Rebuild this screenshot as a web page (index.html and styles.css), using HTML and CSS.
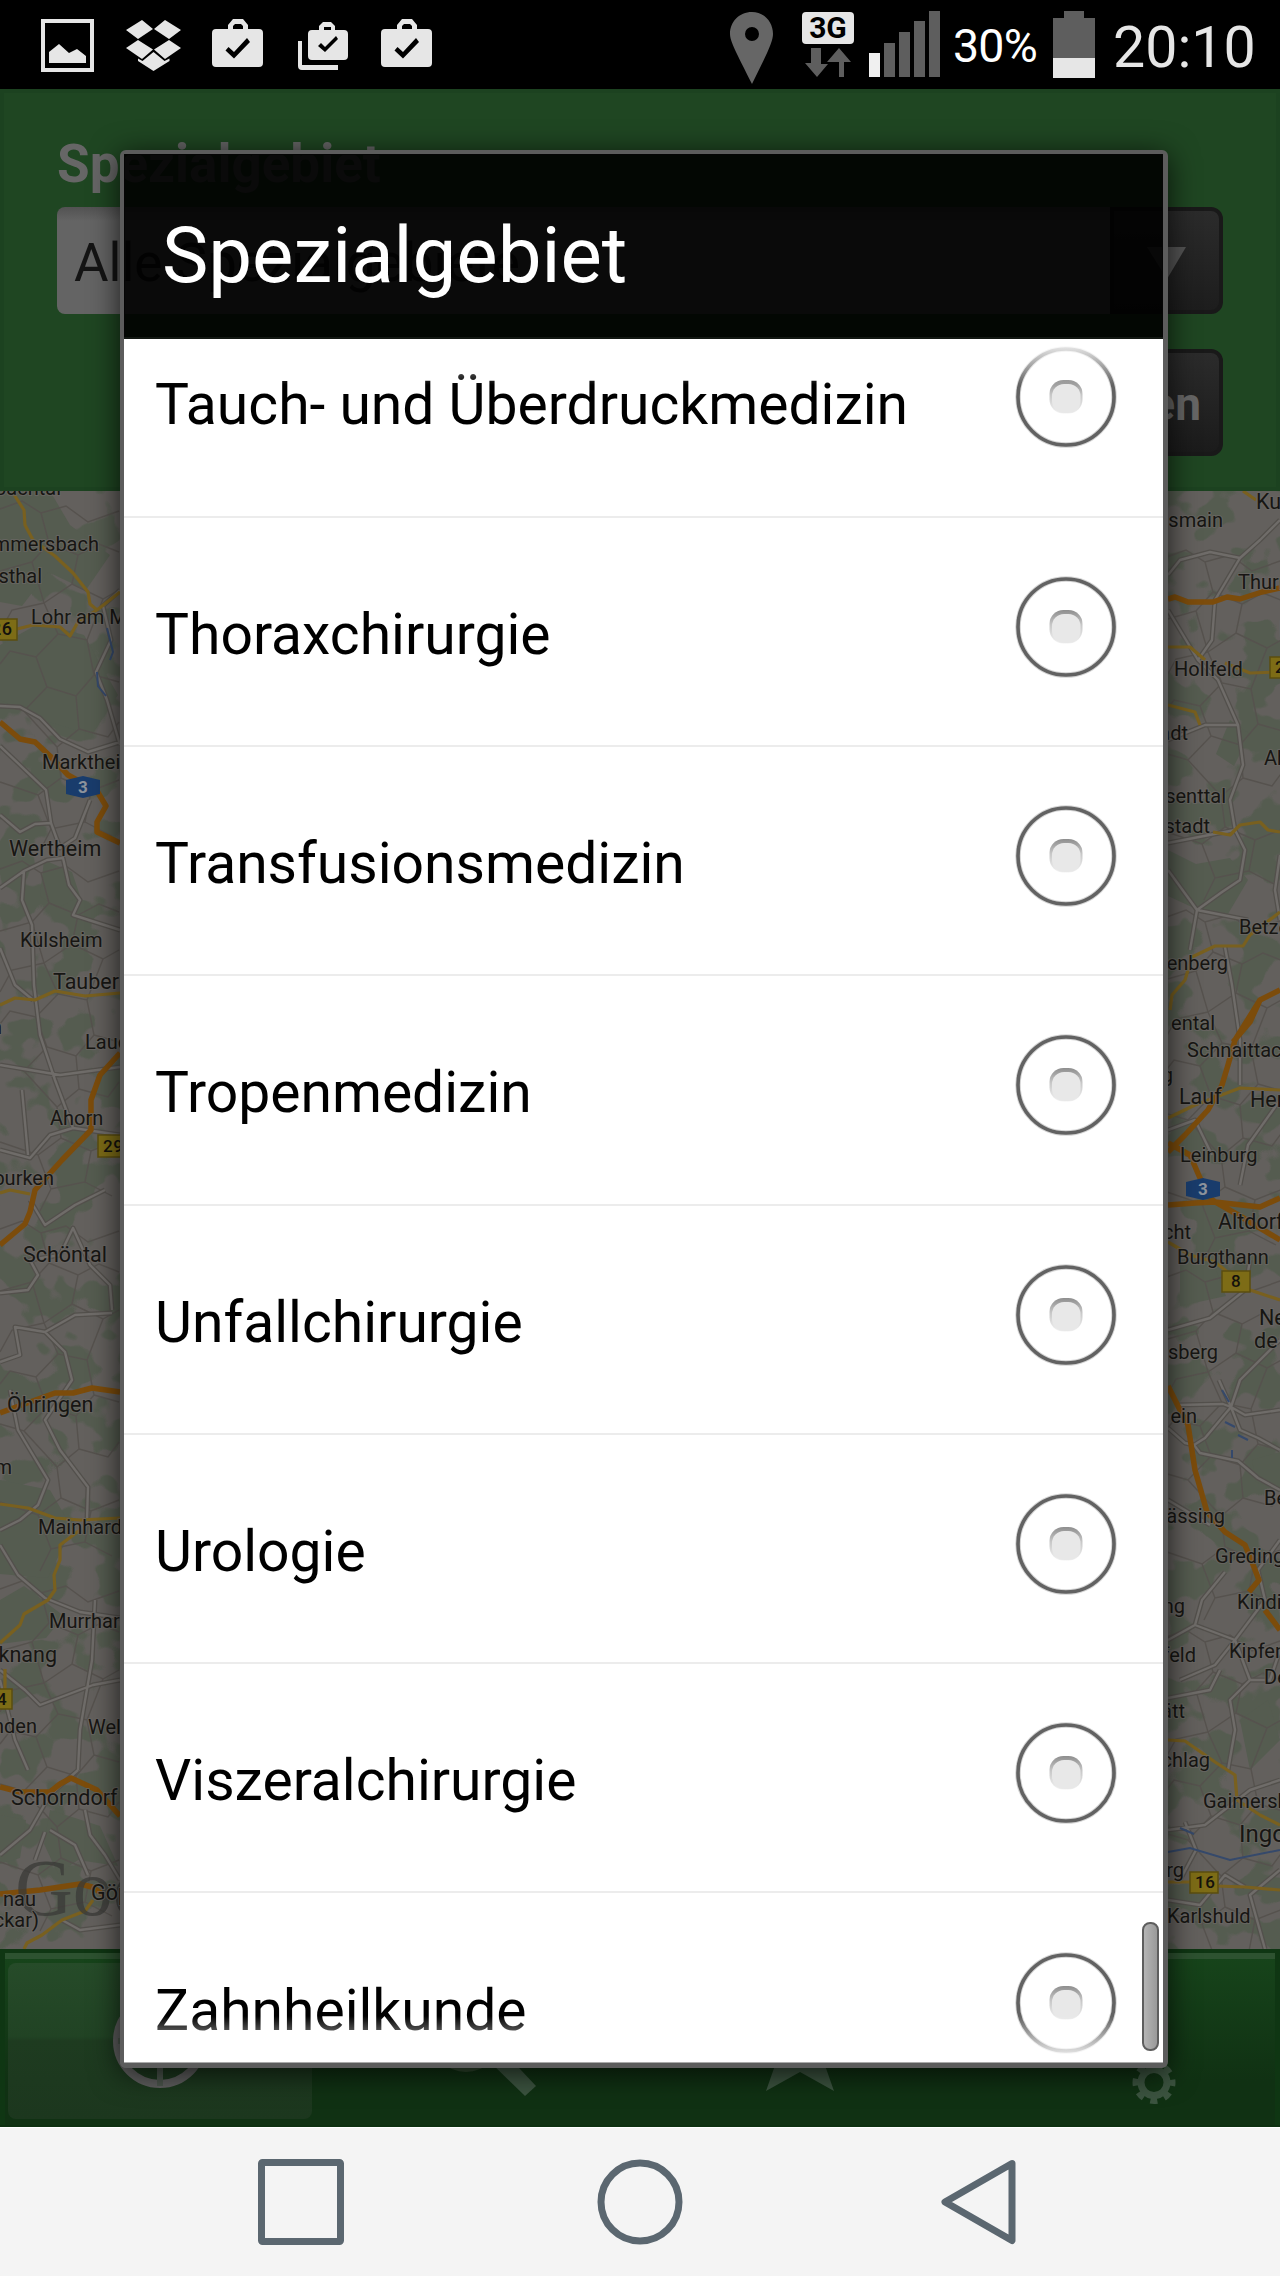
FILE: index.html
```html
<!DOCTYPE html>
<html lang="de">
<head>
<meta charset="utf-8">
<title>Spezialgebiet</title>
<link rel="stylesheet" href="styles.css">
</head>
<body>
<svg class="defs" width="0" height="0" aria-hidden="true">
  <defs>
    <linearGradient id="dot" x1="0" y1="0" x2="0" y2="1">
      <stop offset="0" stop-color="#8e8e8e"/><stop offset=".45" stop-color="#c8c8c8"/><stop offset="1" stop-color="#f2f2f2"/>
    </linearGradient>
    <symbol id="radio" viewBox="0 0 104 104">
      <circle cx="52" cy="52" r="48" fill="none" stroke="#aaa" stroke-width="5.5" opacity=".5"/>
      <circle cx="52" cy="52" r="48" fill="none" stroke="#626262" stroke-width="3.6"/>
      <rect x="35.500" y="35" width="33" height="33.500" rx="14" fill="url(#dot)"/>
      <rect x="38" y="39" width="28.500" height="29" rx="12" fill="#e8e8e8"/>
    </symbol>
    <symbol id="bag" viewBox="0 0 52 50">
      <path fill="#e6e6e6" fill-rule="evenodd" d="M16 10V6l5-6h10l5 6v4h11q4 0 4 4v30q0 4-4 4H4q-4 0-4-4V14q0-4 4-4zM21 10h10V7l-2-2h-6l-2 2zM13.500 31.500 22 39.500 38 23l-3-4L22 33l-5.500-5z"/>
    </symbol>
  </defs>
</svg>
<div class="phone">
  <header class="status">
    <div class="notices">
      <svg width="53" height="53" viewBox="0 0 53 53"><path d="M2 2h49v49H2z" fill="none" stroke="#e6e6e6" stroke-width="4"/><path d="M8 44V33l10-8 10 9 8-4 9 7v7z" fill="#e6e6e6"/></svg>
      <svg width="55" height="51" viewBox="0 0 55 51"><path fill="#e6e6e6" d="M16 0 27 9 12 19 0 10zM39 0 55 10 43 19 28 9zM12 20 27 29.500 16 39 0 28zM43 20 55 28 39 39 28 29.500zM27.500 32 38.500 41l5-2.500V41L27.500 51 12 41v-2.500l4.500 2.500z"/></svg>
      <svg width="52" height="50"><use href="#bag"/></svg>
      <svg width="52" height="50" viewBox="0 0 52 50"><path fill="#e6e6e6" fill-rule="evenodd" d="M22 10V6l4-4h8l4 4v4h9q4 0 4 4v22q0 4-4 4H15q-4 0-4-4V14q0-4 4-4zM27 10h7V7h-7zM21 26l7 6 13-13-2-3-11 11-4-4z"/><path fill="#e6e6e6" d="M1 21h4v24h36v5H5q-4 0-4-4z"/></svg>
      <svg width="52" height="50"><use href="#bag"/></svg>
    </div>
    <svg class="signals" width="212" height="74" viewBox="0 0 212 74">
      <path fill="#666" fill-rule="evenodd" d="M22 0C9 0 0 10 0 22c0 7 6 18 22 50 16-32 21-43 21-50C43 10 34 0 22 0zm0 15a7 7 0 1 1 0 14 7 7 0 0 1 0-14z"/>
      <rect x="72" y="0" width="52" height="32" rx="4" fill="#e6e6e6"/>
      <text x="98" y="26" text-anchor="middle" class="net">3G</text>
      <path fill="#5e5e5e" d="M81 36h10v16h7L87 65 75 51h6zM109 65V50h-12l12-14 12 14h-7v15z"/>
      <path fill="#f0f0f0" d="M139 41h11v24h-11z"/>
      <path fill="#5e5e5e" d="M154 31h11v34h-11zM169 20h11v45h-11zM184 9h11v56h-11zM199-1h11v66h-11z"/>
    </svg>
    <span class="percent">30%</span>
    <svg class="battery" width="42" height="67" viewBox="0 0 42 67"><path fill="#5e5e5e" d="M11 0h20v7h11v60H0V7h11z"/><path fill="#e6e6e6" d="M0 47h42v20H0z"/></svg>
    <span class="clock">20:10</span>
  </header>

  <section class="filter">
    <div class="label">Spezialgebiet</div>
    <div class="select"><span class="value">Alle Spezialgebiete</span><span class="drop"><svg width="40" height="32" viewBox="0 0 40 32"><path d="M0 0h39L20 32z" fill="#555"/></svg></span></div>
    <div class="actions"><span class="button">Suchen</span></div>
  </section>

  <svg class="map" width="1280" height="1458" viewBox="0 491 1280 1458">
    <defs>
      <filter id="woods" x="0" y="0" width="100%" height="100%" color-interpolation-filters="sRGB">
        <feTurbulence type="fractalNoise" baseFrequency=".021 .025" numOctaves="3" seed="12"/>
        <feColorMatrix values="0 0 0 0 .333  0 0 0 0 .361  0 0 0 0 .314  0 22 0 0 -11.300"/>
      </filter>
      <g id="lanes">
        <path d="M0 18 22 10 41 22 66 15 88 31 119 20M41 22 49 52 32 71 0 80M49 52 78 64 99 53 119 61M78 64 72 93 44 112 32 71M72 93 103 108 119 99M44 112 12 119 0 141M44 112 58 143 87 149 103 108M58 143 36 166 10 160 0 173M36 166 47 196 76 205 94 184 87 149M94 184 119 191M47 196 24 220 0 213M76 205 79 238 57 256 24 220M79 238 108 246 119 231M57 256 61 287 38 304 0 291M61 287 91 300 119 289M91 300 85 331 51 338 38 304M51 338 40 360M85 331 112 345"/>
      </g>
      <g id="roads">
        <path d="M0 706 20 707 40 718 60 739 88 752 120 742M120 590 103 606 111 640 96 672 107 700 120 745M0 815 20 832 35 824 51 823 60 848 75 838 90 800M51 823 46 790 0 746M0 888 24 871 47 860 63 858 69 885 80 900 73 915 120 930M24 871 22 900 32 925 34 985 40 1035 55 1080 73 1128 120 1135M0 948 15 985 33 1000M0 1065 60 1075 120 1067M0 1150 30 1158 50 1135 73 1128M22 1090 28 1155M30 1200 45 1225 75 1205 105 1190M0 1293 28 1290 38 1275 30 1260 60 1255 73 1228 90 1265 110 1285 112 1310 M112 1313 75 1315 45 1332 15 1327 20 1355 0 1362M45 1332 65 1352 72 1380 45 1420 60 1450 88 1487 87 1520M10 1390 18 1430 48 1480 38 1505 20 1520 0 1530M0 1545 18 1575 45 1598 80 1612 120 1618M95 1600 92 1660 80 1730 78 1770M0 1670 25 1690 40 1705 93 1685 120 1680M78 1770 50 1795 30 1830 0 1855M85 1810 90 1835 105 1855 120 1880M50 1830 75 1845 88 1875M45 1832 35 1860M0 1680 15 1740 28 1770M62 1920 80 1930 120 1925"/>
        <path d="M1168 575 1180 560 1210 552 1240 558 1260 540 1280 520M1240 558 1215 600 1212 640 1198 660 1168 610M1198 660 1218 680 1238 725 1243 765 1230 800 1235 830 1168 843M1168 740 1205 725 1238 725M1235 830 1245 850 1240 880 1222 892 1197 910 1168 870M1197 910 1190 950M1197 910 1248 920M1280 855 1275 890 1280 920M1225 947 1232 985 1240 1040 1240 1085M1168 1130 1195 1120 1212 1155M1280 1100 1248 1145 1240 1185M1250 1260 1245 1290 1210 1318 1168 1330M1280 1340 1240 1380 1231 1407 1223 1404 1178 1405M1219 1380 1231 1407M1231 1407 1245 1415 1280 1410M1231 1407 1205 1438 1194 1445 1200 1453 1238 1461 1258 1478 1280 1490M1231 1407 1240 1430 1258 1438 1280 1450M1168 1428 1185 1443 1194 1445M1168 1500 1210 1525M1280 1540 1258 1570 1265 1600 1235 1640 1195 1625 1202 1600 1225 1572M1168 1640 1195 1625M1235 1640 1215 1665 1180 1680M1235 1640 1250 1680 1230 1700 1235 1730 1228 1770M1280 1650 1270 1680 1250 1680M1168 1698 1210 1690 1220 1670M1168 1830 1205 1825 1250 1790 1280 1780M1180 1880 1196 1850 1185 1822M1280 1870 1250 1895 1265 1949M1168 1900 1200 1905 1225 1875 1245 1887"/>
      </g>
    </defs>
    <rect y="491" width="1280" height="1458" fill="#63605d"/>
    <rect y="491" width="1280" height="1458" filter="url(#woods)"/>
    <path fill="#555c50" d="M0 491h50l20 34 40 30-24 35-38-18-26 34-22-4zM0 645l40-22 44 12 34 60-26 40-50-15-42-20zM44 860l28 12 8 24-22 12-18-12zM0 1480l50 10 22 38-24 50-48-4zM0 1600l24-14 40 30-18 22-46 6zM1168 850l28 14 34-6 18 22-20 34-34-6-26-12zM1230 720l20 14-16 32-18-12zM1180 1260l30-6 16 42-46 10zM1252 1460l28-8v40l-24-10zM1240 1720l28-20 12 40-30 30zM0 1815l26 5-6 38-20 6zM50 1810l50 16 18 40-40-6-20 14-14-30z"/>
    <g class="lane">
      <use href="#lanes" y="491"/><use href="#lanes" y="851"/><use href="#lanes" y="1211"/><use href="#lanes" y="1571"/>
      <use href="#lanes" x="1164" y="540"/><use href="#lanes" x="1164" y="900"/><use href="#lanes" x="1164" y="1260"/><use href="#lanes" x="1164" y="1620"/>
    </g>
    <use href="#roads" class="road-edge"/>
    <use href="#roads" class="road-fill"/>
    <g class="water"><path d="M107 628 113 652 110 660M97 672l1 14 8 10M1168 1852 1190 1848 1230 1860 1280 1850M1222 1390l7 12M1225 1422l10 5M1238 1435l10 5M1232 1450v8M1180 1828l14 6"/></g>
    <g class="yellow">
      <path d="M13 493 24 510 25 525 33 540 55 556 73 573 88 592 90 604 97 610 120 592M17 629 33 625 60 627 70 636 78 622 97 610M0 1005 15 998 35 1000 55 991 85 996 120 993M0 1193 10 1190 30 1194M0 1504 28 1508 55 1518 80 1520 120 1518M80 1530 60 1545 60 1560 54 1575 55 1590 48 1600 24 1614 20 1625 0 1643M5 1669 5 1689M24 1949 27 1943 42 1935 62 1920 85 1911 93 1900"/>
      <path d="M1243 491 1256 500M1168 647 1190 647 1205 660M1225 663 1250 673 1280 672M1168 705 1195 712 1200 725M1213 832 1230 835 1240 825 1260 822 1268 830 1280 832M1280 912 1250 935 1243 946 1215 946 1192 957 1185 980 1172 995 1170 1010M1168 1118 1195 1105 1240 1088 1280 1090M1168 1242 1190 1255 1215 1262 1250 1290 1280 1300M1168 1740 1185 1741 1215 1762 1235 1775 1237 1800 1260 1815 1280 1825M1168 1882 1190 1882 1217 1886 1245 1887 1280 1890"/>
    </g>
    <g class="motorway">
      <path d="M0 722 20 739 35 742 50 756 68 775 97 791 106 806 97 822 97 832 120 843M120 1053 100 1075 91 1100 91 1130 62 1160 35 1190 30 1212 25 1224 0 1245M0 1413 30 1402 55 1393 73 1393 92 1388 120 1392M0 1787 20 1792 50 1792 60 1784 71 1778 97 1790 120 1816M0 1894 40 1890 80 1884 92 1887 104 1895"/>
      <path d="M1168 599 1175 597 1188 602 1213 602 1227 597 1240 599 1262 592 1280 588M1280 990 1260 1000 1245 1024 1235 1040 1228 1065 1222 1085 1208 1110 1185 1135 1168 1152M1260 1000 1250 1022 1233 1042M1168 1205 1195 1203 1215 1202 1260 1207 1280 1198M1168 1143 1190 1155 1200 1178 1212 1200 1240 1216 1280 1240M1168 1386 1179 1408 1188 1425 1195 1470 1207 1512 1225 1532 1245 1545 1252 1562 1259 1580 1249 1592M1265 1610 1280 1630"/>
    </g>
    <g class="badge">
      <path d="M-10 619h27v21h-27zM98 1135h28v22H98zM-10 1689h22v20h-22zM1270 657h28v21h-28zM1222 1271h28v21h-28zM1190 1872h28v21h-28z"/>
      <g class="shield"><path d="M66 780 83 776 100 780V794L83 798 66 794zM1186 1182 1203 1178 1220 1182V1196L1203 1200 1186 1196z"/></g>
    </g>
    <g class="badge-text">
      <text x="-9" y="635" font-size="18">26</text><text x="103" y="1152">29</text><text x="-3" y="1705">4</text><text x="1275" y="673">2</text><text x="1231" y="1287">8</text><text x="1195" y="1888">16</text>
      <text class="light" x="78" y="793">3</text><text class="light" x="1198" y="1195">3</text>
    </g>
    <text class="brand" x="15" y="1915">Google</text>
    <g class="places">
      <g text-anchor="end">
        <text x="61" y="495">bachtal</text><text x="99" y="551">mmersbach</text><text x="42" y="583">sthal</text><text x="2" y="1034">n</text><text x="54" y="1185">burken</text><text x="12" y="1474">m</text><text x="57" y="1662" class="mid">knang</text><text x="37" y="1733">nden</text><text x="36" y="1906">nau</text><text x="39" y="1927">ckar)</text>
        <text x="1223" y="527">smain</text><text x="1188" y="740">adt</text><text x="1226" y="803">senttal</text><text x="1210" y="833">stadt</text><text x="1228" y="970">fenberg</text><text x="1215" y="1030">ental</text><text x="1173" y="1082">g</text><text x="1191" y="1239">cht</text><text x="1218" y="1359">rsberg</text><text x="1197" y="1423">ein</text><text x="1225" y="1523">ässing</text><text x="1185" y="1613">ng</text><text x="1196" y="1662">feld</text><text x="1185" y="1718">ätt</text><text x="1210" y="1767">chlag</text><text x="1184" y="1877">rg</text>
      </g>
      <text x="31" y="624">Lohr am M</text><text x="42" y="769">Marktheid</text><text x="9" y="856" class="mid">Wertheim</text><text x="20" y="947">Külsheim</text><text x="53" y="989" class="mid">Tauber</text><text x="85" y="1049">Lauda</text><text x="50" y="1125">Ahorn</text><text x="23" y="1262" class="mid">Schöntal</text><text x="7" y="1412" class="mid">Öhringen</text><text x="38" y="1534">Mainhardt</text><text x="49" y="1628">Murrhardt</text><text x="88" y="1734">Welz</text><text x="11" y="1805" class="mid">Schorndorf</text><text x="91" y="1900" class="mid">Göp</text>
      <text x="1256" y="509" class="mid">Kul</text><text x="1238" y="589">Thurn</text><text x="1174" y="676">Hollfeld</text><text x="1279" y="636">E</text><text x="1264" y="765">Ah</text><text x="1239" y="934">Betze</text><text x="1187" y="1057">Schnaittac</text><text x="1179" y="1104" class="mid">Lauf</text><text x="1250" y="1107" class="mid">Her</text><text x="1180" y="1162">Leinburg</text><text x="1218" y="1229" class="mid">Altdorf</text><text x="1177" y="1264">Burgthann</text><text x="1259" y="1325" class="mid">Ne</text><text x="1254" y="1348" class="mid">de</text><text x="1264" y="1505">Be</text><text x="1215" y="1563">Greding</text><text x="1237" y="1609">Kindi</text><text x="1229" y="1658">Kipfen</text><text x="1264" y="1684">De</text><text x="1203" y="1808">Gaimersh</text><text x="1239" y="1842" class="city">Ingo</text><text x="1167" y="1923">Karlshuld</text>
    </g>
  </svg>

  <nav class="tabs">
    <div class="tabs-shine"></div>
    <div class="tab-row">
      <div class="tab active"><svg width="304" height="156" viewBox="8 1963 304 156"><circle cx="160" cy="2041" r="43" fill="none" stroke="#5f5f5f" stroke-width="8"/><path d="M160 2000v86M118 2041h84" stroke="#4c564d" stroke-width="6"/></svg></div>
      <div class="tab"><svg width="304" height="156" viewBox="328 1963 304 156"><circle cx="466" cy="2037" r="31" fill="none" stroke="#31492f" stroke-width="8"/><path d="M485 2057 502 2050 536 2086 525 2096z" fill="#3c5440"/></svg></div>
      <div class="tab"><svg width="304" height="156" viewBox="648 1963 304 156"><path d="m800 1995 12 37h40l-31 22 13 37-34-19-34 19 13-37-31-22h40z" fill="#3c5440"/></svg></div>
      <div class="tab"><svg width="304" height="156" viewBox="968 1963 304 156"><circle cx="1154" cy="2082.500" r="13" fill="none" stroke="#3c5440" stroke-width="7"/><circle cx="1154" cy="2082.500" r="18" fill="none" stroke="#3c5440" stroke-width="7" stroke-dasharray="7 7.137" stroke-dashoffset="3.500"/></svg></div>
    </div>
  </nav>

  <footer class="keys">
    <svg width="86" height="86" viewBox="0 0 86 86"><rect x="3.500" y="3.500" width="79" height="79" rx="1"/></svg>
    <svg width="86" height="86" viewBox="0 0 86 86"><circle cx="43" cy="43" r="39"/></svg>
    <svg width="76" height="86" viewBox="0 0 76 86"><path d="M72 4.500 5 43 72 81.500z"/></svg>
  </footer>

  <div class="dialog">
    <h1 class="title">Spezialgebiet</h1>
    <div class="list">
      <ul class="items">
        <li><span>Tauch- und Überdruckmedizin</span><svg class="radio"><use href="#radio"/></svg></li>
        <li><span>Thoraxchirurgie</span><svg class="radio"><use href="#radio"/></svg></li>
        <li><span>Transfusionsmedizin</span><svg class="radio"><use href="#radio"/></svg></li>
        <li><span>Tropenmedizin</span><svg class="radio"><use href="#radio"/></svg></li>
        <li><span>Unfallchirurgie</span><svg class="radio"><use href="#radio"/></svg></li>
        <li><span>Urologie</span><svg class="radio"><use href="#radio"/></svg></li>
        <li><span>Viszeralchirurgie</span><svg class="radio"><use href="#radio"/></svg></li>
        <li><span>Zahnheilkunde</span><svg class="radio"><use href="#radio"/></svg></li>
      </ul>
      <div class="scrollbar"></div>
    </div>
  </div>
</div>
</body>
</html>
```
FILE: styles.css
```css
* { box-sizing: border-box; }
body { margin: 0; background: #000; font-family: Roboto, "Liberation Sans", sans-serif; }
svg { display: block; flex: none; }
.defs { position: absolute; }
.phone { position: relative; width: 1280px; height: 2276px; overflow: hidden; display: flex; flex-direction: column; }

.status { height: 89px; flex: none; background: #000; display: flex; align-items: flex-start; padding-left: 41px; overflow: hidden; white-space: nowrap; }
.notices { display: flex; width: 689px; padding-top: 19px; gap: 32.500px; }
.notices svg:nth-child(2) { margin: 1px 0 0 -1px; }
.notices svg:nth-child(3) { margin-left: -1px; }
.notices svg:nth-child(4) { margin-top: 1px; }
.signals { margin-top: 12px; overflow: visible; }
.net { font: 700 30px Roboto, sans-serif; fill: #000; }
.percent { width: 111px; padding-left: 11px; font-size: 46.500px; line-height: 93px; color: #fff; letter-spacing: -.8px; }
.battery { margin-top: 11px; }
.clock { margin-left: 18px; font-size: 57.300px; line-height: 95px; color: #e6e6e6; }

.filter { height: 402px; flex: none; padding: 28px 57px 0 57px; background: #1f4622; box-shadow: inset 0 0 0 4px #1c4220; }
.label { height: 90px; font-size: 53px; font-weight: 700; line-height: 94px; color: #666; }
.select { display: flex; height: 107px; border-radius: 8px; overflow: hidden; }
.value { flex: 1; padding-left: 17px; font-size: 53px; line-height: 112px; color: #141414; background: linear-gradient(#525252, #646464 14px); }
.drop { width: 113px; display: flex; align-items: center; padding: 5px 0 0 33px; background: linear-gradient(#2b2b2b, #1d1d1d); border: 4px solid #191919; border-radius: 0 12px 12px 0; }
.actions { display: flex; justify-content: flex-end; margin-top: 35px; }
.button { width: 300px; height: 107px; padding-right: 18px; text-align: right; font-size: 46px; font-weight: 700; line-height: 103px; color: #666; background: linear-gradient(#2b2b2b, #1b1b1b); border: 4px solid #191919; border-radius: 12px; }

.map { overflow: hidden; }
.lane { fill: none; stroke: #56524e; stroke-width: 1.4; }
.road-edge { fill: none; stroke: #53504c; stroke-width: 5; stroke-linejoin: round; }
.road-fill { fill: none; stroke: #6f6c69; stroke-width: 2.4; stroke-linejoin: round; }
.water { fill: none; stroke: #35496b; stroke-width: 2; }
.yellow { fill: none; stroke: #79601f; stroke-width: 3.2; stroke-linejoin: round; }
.motorway { fill: none; stroke: #7c4c0b; stroke-width: 5.5; stroke-linejoin: round; }
.badge { fill: #7d6c16; stroke: #5b4d0f; stroke-width: 1.5; }
.shield { fill: #193c6c; stroke: none; }
.badge-text { font-size: 17px; font-weight: 500; letter-spacing: .5px; fill: #14120c; }
.light { fill: #8d939c; font-weight: 700; }
.places { font-size: 20px; fill: #171613; stroke: #6a6764; stroke-width: 2.2px; stroke-opacity: .8; paint-order: stroke; stroke-linejoin: round; }
.mid { font-size: 21.500px; }
.city { font-size: 24px; }
.brand { font: 80px "Liberation Serif", serif; fill: #3a3937; fill-opacity: .75; }

.tabs { height: 178px; flex: none; padding: 4px 5px; background: linear-gradient(#17451b, #103113 75%); border: solid #0d3011; border-width: 0 0 2px; box-shadow: inset 5px 4px #0f3613, inset -5px 0 #0f3613; }
.tabs-shine { height: 6px; background: #2d5230; }
.tab-row { display: flex; gap: 16px; padding: 4px 3px 0; }
.tab { width: 304px; height: 156px; border-radius: 8px; }
.active { background: linear-gradient(#264b29, #214324 47%, #1e3b20 50%, #1c371e); }

.keys { height: 149px; flex: none; display: flex; padding: 31px 0 0 258px; background: #f4f4f4; border-top: 1px solid #fff; fill: none; stroke: #5b6770; stroke-width: 7; stroke-linejoin: round; }
.keys svg:nth-child(2) { margin-left: 253px; }
.keys svg:nth-child(3) { margin-left: 257px; }

.dialog { position: absolute; left: 120px; top: 150px; width: 1048px; height: 1918px; display: flex; flex-direction: column; border: solid #5c5c5c; border-width: 4px 5px 5px 4px; border-radius: 6px; box-shadow: 0 5px 30px rgba(0, 0, 0, .75), inset 0 0 0 1px #333; }
.title { margin: 0; height: 185px; flex: none; padding-left: 38px; background: rgba(0, 0, 0, .9); border-bottom: 2px solid #131813; color: #fff; font-size: 78px; font-weight: 400; line-height: 203px; }
.list { position: relative; flex: 1; min-height: 0; overflow: hidden; background: #fff; border-bottom: 1px solid #aaa; }
.list::before, .list::after { content: ""; position: absolute; left: 0; right: 0; top: 0; height: 46px; background: linear-gradient(#fff, rgba(255, 255, 255, 0)); }
.list::after { top: auto; bottom: 0; background: linear-gradient(rgba(255, 255, 255, 0), #fff); }
.items { margin: -50.700px 0 0; padding: 0; list-style: none; }
.items li { height: 229.300px; display: flex; align-items: center; justify-content: space-between; padding: 0 45px 0 31px; border-bottom: 2px solid #ececec; color: #000; font-size: 57px; }
.items span { padding-top: 6px; white-space: nowrap; }
.radio { width: 104px; height: 104px; margin-bottom: 9px; }
.scrollbar { position: absolute; z-index: 1; right: 4px; bottom: 11px; width: 17px; height: 129px; border: 2px solid #5e5e5e; border-radius: 8px; background: linear-gradient(90deg, #b5b5b5, #999); }
```
